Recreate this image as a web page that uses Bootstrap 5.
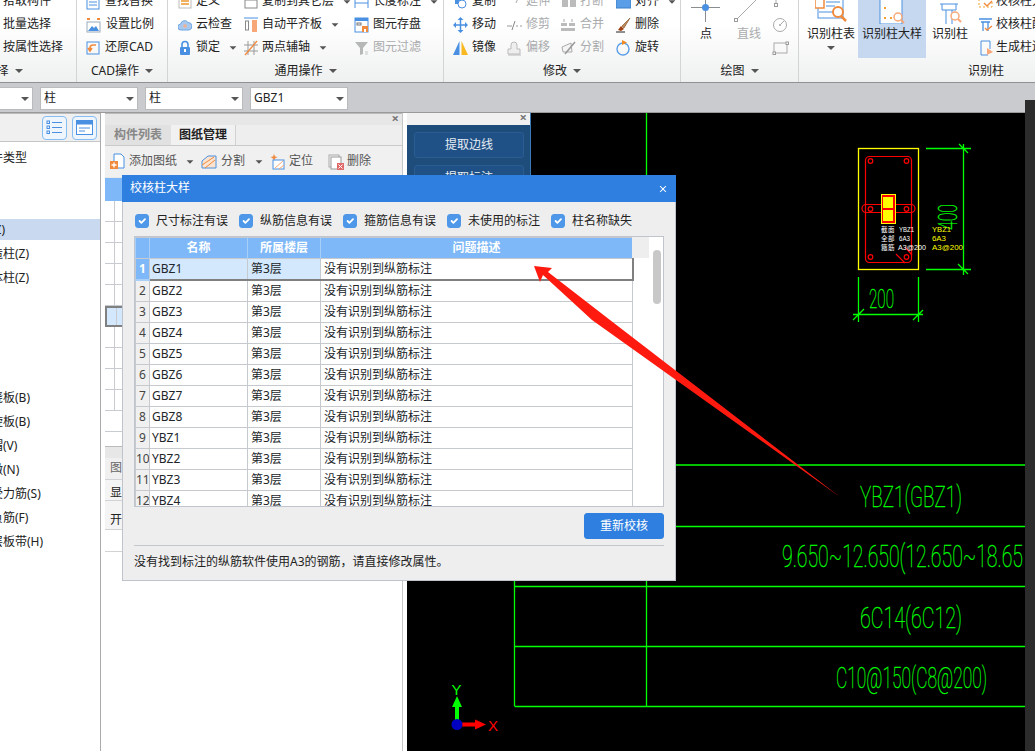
<!DOCTYPE html>
<html lang="zh-CN">
<head>
<meta charset="UTF-8">
<meta name="viewport" content="width=device-width, initial-scale=1.0">
<title>校核柱大样</title>
<link href="https://cdn.jsdelivr.net/npm/bootstrap@5.3.0/dist/css/bootstrap.min.css" rel="stylesheet">
<style>
    html, body { height: 100%; overflow: hidden; background: #fff; }
    body { font-family: "Noto Sans", "Noto Sans CJK SC", sans-serif; font-size: 12px; line-height: 1.2; color: #222; }
    .app { width: 1035px; height: 751px; position: relative; overflow: hidden; }
    svg { display: block; flex: none; }

    /* ribbon */
    .ribbon { height: 83px; overflow: hidden; background: linear-gradient(#fff 30%, #eff0f0); border-bottom: 1px solid #8f9295; }
    .rb-group { height: 82px; border-right: 1px solid #d2d4d6; flex: none; }
    .rb-body { height: 69px; margin-top: -10px; }
    .rb-label { height: 24px; display: flex; align-items: center; justify-content: center; gap: 6px; white-space: nowrap; }
    .rb-col { flex: none; }
    .rb-item { height: 23px; display: flex; align-items: center; gap: 4px; white-space: nowrap; }
    .rb-item.off { color: #a9abad; }
    .tri { display: inline-block; flex: none; width: 0; height: 0; border-left: 4px solid transparent; border-right: 4px solid transparent; border-top: 4px solid #555; }
    .rb-item .tri { margin-left: 5px; transform: scale(.85); }
    .g1 { width: 146px; margin-left: -69px; } .g1 .rb-body { padding-left: 72px; }
    .g2 { width: 91px; } .g2 .rb-body { padding-left: 9px; } .g2 .rb-item { gap: 5px; }
    .g3 { width: 276px; } .g3 .rb-body { padding-left: 10px; }
    .g4 { width: 237px; } .g4 .rb-body { padding-left: 9px; }
    .g5 { width: 118px; } .g5 .rb-body { padding-left: 8px; }
    .g6 { width: 372px; border: 0; margin-left: 1px; } .g6 .rb-body { padding-left: 7px; }
    .w66 { width: 66px; } .w110 { width: 110px; } .w54 { width: 54px; } .w55 { width: 55px; }
    .big { flex: none; display: flex; flex-direction: column; align-items: center; height: 68px; white-space: nowrap; }
    .big .big-ico { height: 34px; display: flex; align-items: flex-end; }
    .big .big-txt { height: 22px; line-height: 20px; }
    .big.off { color: #a9abad; }
    .big.on { background: #c6d8ef; }
    .b34 { width: 34px; } .b48 { width: 48px; } .b68 { width: 68px; margin-left: 3px; } .b36 { width: 36px; margin-left: 6px; }
    .gap-b { margin-left: 9px; } .gap-s { margin-left: 5px; }
    .gap-c { margin-left: 10px; }
    .g6 .rb-item { gap: 2px; }

    /* combo bar */
    .combos { height: 28px; background: #c9cbce; padding-top: 4px; gap: 7px; margin-left: -65px; }
    .combo { width: 98px; height: 23px; background: #fff; border: 1px solid #b9bbbd; display: flex; align-items: center; justify-content: space-between; padding: 0 3px 0 3px; font-size: 12px; }
    .combo-bar { background: #c9cbce; border-bottom: 1px solid #9a9a9a; height: 30px; }

    /* work area */
    .work { height: 638px; }
    .tree-pane { width: 101px; flex: none; border-right: 1px solid #a9abad; overflow: hidden; }
    .tree-head { height: 29px; background: #f0f0f0; border-top: 1px solid #b8babc; border-bottom: 1px solid #c4c6c8; padding: 0 3px 0 0; gap: 5px; }
    .tree-btn { width: 25px; height: 24px; border: 1px solid #85bdf2; border-radius: 4px; background: #eef5fd; display: flex; align-items: center; justify-content: center; }
    .tree-list { padding-top: 5px; }
    .tree-row { height: 21px; margin-bottom: 3px; line-height: 21px; padding-left: 0; white-space: nowrap; text-indent: -21px; }
    .tree-row.sel { background: #c9daf0; }
    .gutter { width: 4px; flex: none; background: #fff; }

    .list-pane { width: 298px; flex: none; background: #fff; border-right: 1px solid #c4c6c8; }
    .pane-top { height: 12px; background: #e7e7e7; border-top: 1px solid #b8babc; position: relative; }
    .pane-x { position: absolute; right: 3px; top: -2px; font-size: 13px; line-height: 13px; color: #777; font-weight: 700; }
    .tab-row { height: 21px; background: #eee; border-bottom: 1px solid #c8cacc; }
    .tab-a { width: 66px; background: #e1e1e1; color: #888; display: flex; align-items: center; justify-content: center; font-weight: 600; }
    .tab-b { width: 65px; background: #f1f1f1; border-right: 1px solid #cfd1d3; display: flex; align-items: center; justify-content: center; font-weight: 600; }
    .pane-tools { height: 31px; background: #f0f0f0; padding-left: 5px; color: #555; white-space: nowrap; }
    .pane-tools .rb-item { gap: 3px; }
    .pane-tools .tri { margin-left: 6px; transform: scale(.85); }
    .t1 { width: 91px; } .t2 { width: 68px; } .t3 { width: 59px; }
    .t2, .t3 { gap: 4px !important; }
    .grid-head { height: 24px; background: #7eb8f8; border-top: 1px solid #e8e8e8; }
    .grid-row { height: 21px; border-bottom: 1px solid #c8ccd0; display: flex; }
    .grid-row span { display: block; width: 10px; border-right: 1px solid #c8ccd0; }
    .grid-row.sel { background: #d3e8fd; border: 2px solid #808080; border-right: 0; }
    .grid-gap { height: 14px; background: #fff; }
    .grid-row.end span { border-right: 0; }
    .sub-tab { height: 22px; background: #f0f0f0; border-bottom: 1px solid #d0d2d4; padding-left: 5px; display: flex; align-items: center; color: #666; }
    .sub-row { height: 21px; border-bottom: 1px solid #d0d2d4; display: flex; align-items: center; padding: 6px 0 0 5px; background: #f4f4f4; }
    .sub-row.tall { height: 29px; padding-top: 10px; background: #f4f4f4; }
    .sub-row.plain { height: 22px; padding-top: 0; background: #fff; }

    .cad { flex: 1 1 auto; background: #000; position: relative; margin-left: 4px; }
    .cad-svg { width: 618px; height: 638px; }
    .cad-txt { font-family: "Roboto", "Liberation Sans", sans-serif; font-weight: 100; fill: #00ff00; stroke: #00ff00; stroke-width: .35px; }
    .strip { position: absolute; right: 0; top: 100px; width: 10px; height: 651px; background: #2d2c2c; }

    /* floating tool window */
    .tool-win { position: absolute; left: 0; top: 0; width: 124px; height: 300px; background: #1e4d7c; border-right: 1px solid #3a7ab8; }
    .tool-top { height: 12px; background: #f1f1f1; position: relative; }
    .tool-btn { display: block; width: 110px; height: 26px; margin: 7px 0 6px 7px; padding: 0; background: #1f5186; border: 1px solid #2a5d92; border-radius: 3px; color: #e8eef5; font-size: 12px; line-height: 24px; }

    /* dialog */
    .dlg { position: absolute; left: 122px; top: 175px; width: 554px; height: 406px; }
    .dlg .modal-content { height: 100%; background: #eee; border: 1px solid #bfc3cb; border-radius: 0; }
    .dlg .modal-header { height: 27px; background: #2e7fe0; color: #fff; padding: 0 8px 0 8px; border: 0; border-radius: 0; margin: -1px -1px 0; font-size: 12px; }
    .dlg .btn-close { width: 8px; height: 8px; padding: 0; margin: 0 1px 0 0; opacity: 1; background-size: 8px; }
    .checks { padding: 12px 0 0 12px; gap: 11px; height: 34px; }
    .chk-item { display: flex; align-items: flex-start; gap: 7px; white-space: nowrap; line-height: 14px; }
    .chk { width: 14px; height: 14px; margin: 0; border-radius: 3px; }
    .chk:checked { background-color: #4f97e8; border-color: #4f97e8; }
    .frame { margin-left: 11px; width: 530px; height: 271px; border: 1px solid #c0c4cc; background: #fff; position: relative; overflow: hidden; }
    .q-table { width: 497px; table-layout: fixed; margin: 0; --bs-table-border-color: #c6cace; font-size: 12px; border-collapse: collapse; }
    .q-table th, .q-table td { height: 21px; padding: 0 2px; line-height: 20px; vertical-align: middle; white-space: nowrap; overflow: hidden; }
    .q-table td.pad3 { padding-left: 3px; }
    .q-table th { background: #7eb8f8; color: #fff; font-weight: 700; text-align: center; border-color: #a8cff8; }
    .q-table td.num { text-align: center; background: #f0f0f0; padding: 0; color: #444; }
    .q-table tr.cur td { border-bottom: 2px solid #808080; }
    .q-table tr.cur td.num { background: #7eb8f8; color: #fff; font-weight: 700; border-bottom-color: #a8cff8; }
    .q-table tr.cur td.hl { background: #d3e8fd; }
    .q-table tr.cur td.last { border-right: 2px solid #808080; }
    .head-end { position: absolute; left: 497px; top: 0; width: 17px; height: 21px; background: #eee; }
    .thumb { position: absolute; left: 518px; top: 13px; width: 8px; height: 54px; border-radius: 4px; background: #c8c8c8; }
    .act-row { height: 38px; padding: 6px 11px 0 0; }
    .act-btn { width: 80px; height: 26px; padding: 0; font-size: 12px; background: #2e7fe0; border-color: #2e7fe0; border-radius: 3px; }
    .dlg-foot { margin: 0 11px; border-top: 1px solid #c4c8ce; padding-top: 9px; white-space: nowrap; }
    .arrow-layer { position: absolute; left: 0; top: 0; width: 1035px; height: 751px; pointer-events: none; }
</style>
</head>
<body>
<div class="app">

    <!-- ribbon -->
    <div class="ribbon d-flex">
        <div class="rb-group g1">
            <div class="rb-body d-flex">
                <div class="rb-col">
                    <div class="rb-item">拾取构件</div>
                    <div class="rb-item">批量选择</div>
                    <div class="rb-item">按属性选择</div>
                </div>
            </div>
            <div class="rb-label">选择<i class="tri"></i></div>
        </div>

        <div class="rb-group g2">
            <div class="rb-body d-flex">
                <div class="rb-col">
                    <div class="rb-item"><svg width="14" height="16" viewBox="0 0 14 16"><rect x="1" y="1" width="12" height="14" fill="#fff" stroke="#4a90e2"/><path d="M3 5h8M3 8h8M3 11h8" stroke="#4a90e2"/></svg>查找替换</div>
                    <div class="rb-item"><svg width="15" height="16" viewBox="0 0 15 16"><path d="M1 2h3M11 2h3" stroke="#f08a3c" stroke-width="2"/><rect x="1" y="5" width="13" height="10" fill="#fff" stroke="#9ab"/><path d="M2 14l4-5 2 2 2-2 3 5z" fill="#4a90e2"/></svg>设置比例</div>
                    <div class="rb-item"><svg width="14" height="16" viewBox="0 0 14 16"><rect x="1" y="2" width="12" height="12" fill="none" stroke="#4a90e2"/><path d="M10 5H7a3 3 0 0 0-3 3v2M2 8l2 3 2-3" fill="none" stroke="#f08a3c" stroke-width="1.6"/></svg>还原CAD</div>
                </div>
            </div>
            <div class="rb-label">CAD操作<i class="tri"></i></div>
        </div>

        <div class="rb-group g3">
            <div class="rb-body d-flex">
                <div class="rb-col w66">
                    <div class="rb-item"><svg width="14" height="16" viewBox="0 0 14 16"><rect x="1" y="2" width="12" height="12" fill="#fff" stroke="#bbb"/><path d="M3 7h8M3 10h8" stroke="#f0b060" stroke-width="2"/></svg>定义</div>
                    <div class="rb-item"><svg width="14" height="16" viewBox="0 0 14 16"><path d="M3 13a3 3 0 0 1-.3-6A4 4 0 0 1 10 5.500a3.800 3.800 0 0 1 1 7.500z" fill="#a9c9ee" stroke="#6da5e5"/><circle cx="7" cy="9" r="1.800" fill="#f0b090"/></svg>云检查</div>
                    <div class="rb-item"><svg width="14" height="16" viewBox="0 0 14 16"><path d="M4 7V4.500a3 3 0 0 1 6 0V7" fill="none" stroke="#4a90e2" stroke-width="1.600"/><rect x="2" y="7" width="10" height="8" rx="1" fill="#4a90e2"/><rect x="6" y="9" width="2" height="3" fill="#fff"/></svg>锁定<i class="tri"></i></div>
                </div>
                <div class="rb-col w110">
                    <div class="rb-item"><svg width="14" height="16" viewBox="0 0 14 16"><rect x="1" y="6" width="12" height="8" fill="#fff" stroke="#888"/><path d="M1 3h12" stroke="#4a90e2" stroke-width="2"/></svg>复制到其它层<i class="tri"></i></div>
                    <div class="rb-item"><svg width="14" height="16" viewBox="0 0 14 16"><path d="M0 1h14" stroke="#4a90e2"/><rect x="1.500" y="4" width="3" height="9" fill="#fff" stroke="#888"/><rect x="8" y="3" width="5" height="12" fill="#f8a878"/></svg>自动平齐板<i class="tri"></i></div>
                    <div class="rb-item"><svg width="14" height="16" viewBox="0 0 14 16"><path d="M4 1v14M10 1v14M0 5h14M0 11h14" stroke="#999"/><path d="M1 15L13 1" stroke="#f08a3c" stroke-width="1.300"/></svg>两点辅轴<i class="tri"></i></div>
                </div>
                <div class="rb-col">
                    <div class="rb-item gap-1"><svg width="15" height="16" viewBox="0 0 15 16"><path d="M1 4v10M14 4v10M1 9h13" stroke="#4a90e2"/></svg>长度标注<i class="tri"></i></div>
                    <div class="rb-item"><svg width="15" height="16" viewBox="0 0 15 16"><rect x="1" y="1" width="13" height="14" fill="#fff" stroke="#4a90e2"/><rect x="1" y="1" width="13" height="3" fill="#4a90e2"/><rect x="3" y="6" width="4" height="2" fill="none" stroke="#777"/><rect x="8" y="9" width="6" height="6" fill="#f08a3c"/><rect x="10" y="12" width="2" height="3" fill="#fff"/></svg>图元存盘</div>
                    <div class="rb-item off"><svg width="15" height="16" viewBox="0 0 15 16"><path d="M1 2h13l-5 6v6l-3 1V8z" fill="#b5b7b9"/><path d="M11 12h3M11 14h3" stroke="#c5c7c9"/></svg>图元过滤</div>
                </div>
            </div>
            <div class="rb-label">通用操作<i class="tri"></i></div>
        </div>

        <div class="rb-group g4">
            <div class="rb-body d-flex">
                <div class="rb-col w54">
                    <div class="rb-item"><svg width="15" height="16" viewBox="0 0 15 16"><rect x="2" y="2" width="8" height="8" fill="#4a90e2"/><circle cx="9" cy="10" r="4" fill="#fff" stroke="#4a90e2"/></svg>复制</div>
                    <div class="rb-item"><svg width="15" height="16" viewBox="0 0 15 16"><path d="M7.500 2v12M1.500 8h12" stroke="#4a90e2" stroke-width="1.500"/><path d="M7.500 0l-3 3h6zM7.500 16l-3-3h6zM0 8l3-3v6zM15 8l-3-3v6z" fill="#4a90e2"/></svg>移动</div>
                    <div class="rb-item"><svg width="15" height="16" viewBox="0 0 15 16"><path d="M6.500 1v14H0z" fill="#4a90e2"/><path d="M8.500 1v14H15z" fill="#f8b820"/></svg>镜像</div>
                </div>
                <div class="rb-col w54">
                    <div class="rb-item off"><svg width="15" height="16" viewBox="0 0 15 16"><path d="M12 2L9 9" stroke="#aaa"/></svg>延伸</div>
                    <div class="rb-item off"><svg width="15" height="16" viewBox="0 0 15 16"><path d="M0 9h5M9 9h2M13 9h2" stroke="#999"/><path d="M8 4l-3 9" stroke="#888"/></svg>修剪</div>
                    <div class="rb-item off"><svg width="15" height="16" viewBox="0 0 15 16"><path d="M1 14V9h3V5a3 3 0 0 1 6 0v4h3v5z" fill="#eee" stroke="#bbb"/><path d="M1 15h13" stroke="#bbb"/></svg>偏移</div>
                </div>
                <div class="rb-col w55">
                    <div class="rb-item off"><svg width="15" height="16" viewBox="0 0 15 16"><rect x="1" y="3" width="6" height="10" fill="#bbb"/><rect x="9" y="3" width="6" height="10" fill="#bbb"/></svg>打断</div>
                    <div class="rb-item off"><svg width="15" height="16" viewBox="0 0 15 16"><path d="M3 2v3M11 2v3" stroke="#aaa"/><rect x="0" y="6" width="6" height="3" fill="#bbb"/><rect x="8" y="6" width="6" height="3" fill="#bbb"/><rect x="0" y="11" width="14" height="3" fill="#bbb"/></svg>合并</div>
                    <div class="rb-item off"><svg width="15" height="16" viewBox="0 0 15 16"><path d="M1 7l9-4 1 9H2z" fill="#f4f4f4" stroke="#aaa"/><path d="M4 14L14 2" stroke="#999" stroke-width="1.500"/></svg>分割</div>
                </div>
                <div class="rb-col">
                    <div class="rb-item"><svg width="15" height="16" viewBox="0 0 15 16"><rect x="0" y="3" width="15" height="11" fill="#5b9ee8" stroke="#3d7fc8"/></svg>对齐<i class="tri"></i></div>
                    <div class="rb-item"><svg width="15" height="16" viewBox="0 0 15 16"><path d="M14 1L6 9l2 2z" fill="#c08a5a" stroke="#7a4a20" stroke-width=".6"/><path d="M5 9l3 3-3 2-3-1z" fill="#a04010"/><path d="M0 15h9" stroke="#222"/></svg>删除</div>
                    <div class="rb-item"><svg width="15" height="16" viewBox="0 0 15 16"><circle cx="7" cy="9" r="6" fill="none" stroke="#5b9ee8" stroke-width="1.400"/><path d="M6 0l5 2.500L6 5z" fill="#f08a20"/></svg>旋转</div>
                </div>
            </div>
            <div class="rb-label">修改<i class="tri"></i></div>
        </div>

        <div class="rb-group g5">
            <div class="rb-body d-flex">
                <div class="big b34">
                    <div class="big-ico"><svg width="30" height="34" viewBox="0 2 30 34"><path d="M0 19.500h29M14.500 0v34" stroke="#8a8d90"/><circle cx="14.500" cy="19.500" r="3.500" fill="#4a90e2"/></svg></div>
                    <div class="big-txt">点</div>
                </div>
                <div class="big b34 off gap-b">
                    <div class="big-ico"><svg width="34" height="34" viewBox="0 2 34 34"><path d="M4 32L26 10" stroke="#aaa"/><rect x="2.500" y="30.500" width="3" height="3" fill="#fff" stroke="#999"/></svg></div>
                    <div class="big-txt">直线</div>
                </div>
                <div class="rb-col gap-s">
                    <div class="rb-item"><svg width="18" height="16" viewBox="0 0 18 16"><path d="M5 2v8" stroke="#aaa"/><rect x="3.500" y="9.500" width="3" height="3" fill="#fff" stroke="#999"/></svg></div>
                    <div class="rb-item"><svg width="18" height="16" viewBox="0 0 18 16"><circle cx="9" cy="8" r="6.500" fill="none" stroke="#aaa"/><circle cx="9" cy="8" r="1" fill="#aaa"/><path d="M9 8l4-4" stroke="#aaa"/></svg></div>
                    <div class="rb-item"><svg width="18" height="16" viewBox="0 0 18 16"><rect x="3" y="3" width="13" height="10" fill="none" stroke="#aaa"/><rect x="2" y="12" width="2.500" height="2.500" fill="#fff" stroke="#999"/><rect x="15" y="2" width="2.500" height="2.500" fill="#fff" stroke="#999"/></svg></div>
                </div>
            </div>
            <div class="rb-label">绘图<i class="tri"></i></div>
        </div>

        <div class="rb-group g6">
            <div class="rb-body d-flex">
                <div class="big b48">
                    <div class="big-ico"><svg width="32" height="30" viewBox="0 0 32 30"><rect x="3" y="0" width="25" height="24" fill="#fff" stroke="#4a90e2"/><rect x="0" y="5" width="9" height="9" fill="#fff" stroke="#f08a3c" stroke-width="1.500"/><path d="M11 8h14M11 12h9M4 18h16" stroke="#4a90e2"/><circle cx="23" cy="18" r="5" fill="#fff" stroke="#f08a3c" stroke-width="2"/><path d="M26 22l5 5" stroke="#f08a3c" stroke-width="2.500"/></svg></div>
                    <div class="big-txt">识别柱表</div>
                    <i class="tri"></i>
                </div>
                <div class="big b68 on">
                    <div class="big-ico"><svg width="26" height="30" viewBox="0 0 26 30"><rect x="1" y="0" width="22" height="30" fill="#fff" stroke="#4a90e2"/><path d="M5 4h2M11 4h2M18 4h2M5 14h2M5 24h2M11 24h2" stroke="#f0a030" stroke-width="2"/><circle cx="19" cy="23" r="4" fill="#fff" stroke="#f8a878" stroke-width="1.500"/><path d="M22 26l3 3" stroke="#f8a878" stroke-width="2"/></svg></div>
                    <div class="big-txt">识别柱大样</div>
                </div>
                <div class="big b36">
                    <div class="big-ico"><svg width="26" height="32" viewBox="0 0 26 32"><path d="M3 12h18M5 12v6h14v-6M9 18v14M15 18v14" fill="none" stroke="#4a90e2"/><circle cx="18" cy="24" r="4" fill="#fff" stroke="#f8a878" stroke-width="1.500"/><path d="M21 27l3 3" stroke="#f8a878" stroke-width="2"/></svg></div>
                    <div class="big-txt">识别柱</div>
                </div>
                <div class="rb-col gap-c">
                    <div class="rb-item"><svg width="16" height="16" viewBox="0 0 16 16"><rect x="1" y="1" width="13" height="12" fill="none" stroke="#f0a030" stroke-dasharray="2 2"/><path d="M6 9l3 3 5-5" fill="none" stroke="#f08a3c" stroke-width="1.400"/></svg>校核柱大样</div>
                    <div class="rb-item"><svg width="16" height="16" viewBox="0 0 16 16"><path d="M1 2h13M3 5h9M5 5v9M10 5v9" fill="none" stroke="#4a90e2" stroke-width="1.300"/><path d="M7 11l2 2 5-4" fill="none" stroke="#f08a3c" stroke-width="1.400"/></svg>校核柱配筋</div>
                    <div class="rb-item"><svg width="16" height="16" viewBox="0 0 16 16"><path d="M3 1h9v8M3 15h7M3 1v14" fill="none" stroke="#4a90e2"/><path d="M9 8l6 4-6 3z" fill="#f8a878"/></svg>生成柱边线</div>
                </div>
            </div>
            <div class="rb-label">识别柱</div>
        </div>
    </div>

    <!-- combos -->
    <div class="combo-bar">
        <div class="combos d-flex">
            <div class="combo"><span></span><i class="tri"></i></div>
            <div class="combo"><span>柱</span><i class="tri"></i></div>
            <div class="combo"><span>柱</span><i class="tri"></i></div>
            <div class="combo"><span>GBZ1</span><i class="tri"></i></div>
        </div>
    </div>

    <div class="work d-flex">
        <!-- component tree -->
        <div class="tree-pane">
            <div class="tree-head d-flex justify-content-end align-items-center">
                <div class="tree-btn"><svg width="17" height="15" viewBox="0 0 17 15"><g fill="none" stroke="#4a90e2"><rect x="1" y="1" width="2.500" height="2.500"/><rect x="1" y="6" width="2.500" height="2.500"/><rect x="1" y="11" width="2.500" height="2.500"/><path d="M6 2.500h10M6 7.500h10M6 12.500h10"/></g></svg></div>
                <div class="tree-btn"><svg width="17" height="15" viewBox="0 0 17 15"><rect x=".5" y=".5" width="16" height="14" fill="#fff" stroke="#4a90e2"/><rect x=".5" y=".5" width="16" height="4" fill="#4a90e2"/><path d="M3 8h11M3 11h6" stroke="#4a90e2"/></svg></div>
            </div>
            <div class="tree-list" id="treeList"></div>
        </div>
        <div class="gutter"></div>

        <!-- drawing list -->
        <div class="list-pane d-flex flex-column">
            <div class="pane-top"><span class="pane-x">×</span></div>
            <div class="tab-row d-flex">
                <div class="tab-a">构件列表</div>
                <div class="tab-b">图纸管理</div>
            </div>
            <div class="pane-tools d-flex align-items-center">
                <div class="rb-item t1"><svg width="16" height="17" viewBox="0 0 16 17"><path d="M4 1h7l3 3v11H4z" fill="#fff" stroke="#4a90e2"/><rect x="0" y="8" width="8" height="8" fill="#f08a3c"/><path d="M4 9.500v5M1.500 12h5" stroke="#fff" stroke-width="1.300"/></svg>添加图纸<i class="tri"></i></div>
                <div class="rb-item t2"><svg width="16" height="16" viewBox="0 0 16 16"><path d="M1 7l6-5h8v12H1z" fill="#fbe3cf" stroke="#4a90e2"/><path d="M1 11L13 3M4 14l10-8" stroke="#f08a3c"/></svg>分割<i class="tri"></i></div>
                <div class="rb-item t3"><svg width="16" height="16" viewBox="0 0 16 16"><path d="M5 0l1 2.500L8.500 3 6 4.500 5 7 4 4.500 1.500 3 4 2.500z" fill="#f08a3c"/><rect x="4" y="6" width="11" height="9" fill="#fff" stroke="#4a90e2"/><path d="M6 14l8-7M10 15l5-4" stroke="#f8a878"/></svg>定位</div>
                <div class="rb-item"><svg width="16" height="16" viewBox="0 0 16 16"><rect x="1" y="1" width="10" height="12" fill="#f4f4f4" stroke="#aaa"/><rect x="3" y="3" width="10" height="12" fill="#fff" stroke="#999"/><rect x="9" y="9" width="7" height="7" fill="#e06a6a"/><path d="M10.500 10.500l4 4M14.500 10.500l-4 4" stroke="#fff"/></svg>删除</div>
            </div>
            <div class="grid-head"></div>
            <div id="bgGrid"></div>
            <div class="grid-gap"></div>
            <div class="pane-top"></div>
            <div class="sub-tab">图层设置</div>
            <div class="sub-row">显示指定图层</div>
            <div class="sub-row tall">开/关</div>
            <div class="sub-row plain"></div>
        </div>

        <!-- cad canvas -->
        <div class="cad">
            <svg class="cad-svg" viewBox="407 113 618 638">
                <g stroke="#00ff00" stroke-width="1.300" fill="none">
                    <path d="M646.500 113V706M514.500 465V706M407 465H1025M407 526.500H1025M514.500 586.500H1025M514.500 646.500H1025M514.500 706.500H1025"/>
                    <path d="M926 148.500H971M926 269.500H971M963.500 144V275M959 144L968 153M958 264L968 274"/>
                    <path d="M858.500 277V322M918.500 277V322M853 314.500H923M853 320L864 309M913 320L923 310"/>
                </g>
                <text class="cad-txt" x="869" y="307.500" font-size="26" textLength="25" lengthAdjust="spacingAndGlyphs">200</text>
                <text class="cad-txt" transform="translate(957 230) rotate(-90)" font-size="26" textLength="26" lengthAdjust="spacingAndGlyphs">400</text>
                <text class="cad-txt" x="860" y="507" font-size="30" textLength="102" lengthAdjust="spacingAndGlyphs">YBZ1(GBZ1)</text>
                <text class="cad-txt" x="782" y="567" font-size="31" textLength="241" lengthAdjust="spacingAndGlyphs">9.650~12.650(12.650~18.65</text>
                <text class="cad-txt" x="860" y="628" font-size="30" textLength="102" lengthAdjust="spacingAndGlyphs">6C14(6C12)</text>
                <text class="cad-txt" x="836" y="688" font-size="30" textLength="151" lengthAdjust="spacingAndGlyphs">C10@150(C8@200)</text>

                <!-- column section -->
                <rect x="858.500" y="148.500" width="60" height="121" fill="none" stroke="#ffff00" stroke-width="1.300"/>
                <g fill="none" stroke="#ff0000" stroke-width="1.200">
                    <rect x="865.500" y="156.500" width="46" height="106" rx="4"/>
                    <path d="M866 204.500H881M896 204.500H911M866 212.500H881M896 212.500H911M866 204.500a4 4 0 0 0 0 8M911 204.500a4 4 0 0 1 0 8"/>
                    <circle cx="870.500" cy="161" r="2.300"/><circle cx="906.500" cy="161" r="2.300"/>
                    <circle cx="870.500" cy="209" r="2.300"/><circle cx="906.500" cy="209" r="2.300"/>
                    <circle cx="870.500" cy="257" r="2.300"/><circle cx="906.500" cy="257" r="2.300"/>
                    <path d="M896 254L905 263M905 247L912 255"/>
                </g>
                <rect x="881.500" y="194.500" width="14" height="29" fill="#ff0000" stroke="#ffff00"/>
                <rect x="883" y="197" width="10" height="11" fill="#ffff00"/>
                <rect x="883" y="210" width="10" height="11" fill="#ffff00"/>
                <g font-family="Liberation Sans, sans-serif" font-size="7" fill="#ffffff">
                    <text x="881" y="232" textLength="13" lengthAdjust="spacingAndGlyphs">截面</text>
                    <text x="899" y="232" textLength="15" lengthAdjust="spacingAndGlyphs">YBZ1</text>
                    <text x="881" y="241" textLength="13" lengthAdjust="spacingAndGlyphs">全部</text>
                    <text x="899" y="241" textLength="11" lengthAdjust="spacingAndGlyphs">6A3</text>
                    <text x="881" y="250" textLength="13" lengthAdjust="spacingAndGlyphs">箍筋</text>
                    <text x="898" y="250" textLength="28" lengthAdjust="spacingAndGlyphs">A3@200</text>
                </g>
                <g font-family="Liberation Sans, sans-serif" font-size="7" fill="#ffff00">
                    <text x="932" y="232" textLength="19" lengthAdjust="spacingAndGlyphs">YBZ1</text>
                    <text x="932" y="241" textLength="14" lengthAdjust="spacingAndGlyphs">6A3</text>
                    <text x="932" y="250" textLength="31" lengthAdjust="spacingAndGlyphs">A3@200</text>
                </g>

                <!-- ucs -->
                <rect x="455" y="704" width="4" height="20" fill="#00ff00"/>
                <path d="M457 696l5 11h-10z" fill="#00ff00"/>
                <rect x="457" y="722.500" width="20" height="4" fill="#ff0000"/>
                <path d="M486 724.500l-11-5v10z" fill="#ff0000"/>
                <circle cx="457" cy="724.500" r="5.500" fill="#0000c0"/>
                <text x="451.500" y="695" font-family="Liberation Sans, sans-serif" font-size="15" fill="#00ff00">Y</text>
                <text x="488" y="731" font-family="Liberation Sans, sans-serif" font-size="15" fill="#ff0000">X</text>
            </svg>

            <div class="tool-win">
                <div class="tool-top"><span class="pane-x">×</span></div>
                <button class="tool-btn" type="button">提取边线</button>
                <button class="tool-btn" type="button">提取标注</button>
            </div>
        </div>
    </div>
    <div class="strip"></div>

    <!-- dialog -->
    <div class="dlg">
        <div class="modal-content">
            <div class="modal-header">
                <span class="flex-grow-1">校核柱大样</span>
                <button type="button" class="btn-close btn-close-white" aria-label="Close"></button>
            </div>
            <div class="checks d-flex">
                <label class="chk-item"><input class="form-check-input chk" type="checkbox" checked>尺寸标注有误</label>
                <label class="chk-item"><input class="form-check-input chk" type="checkbox" checked>纵筋信息有误</label>
                <label class="chk-item"><input class="form-check-input chk" type="checkbox" checked>箍筋信息有误</label>
                <label class="chk-item"><input class="form-check-input chk" type="checkbox" checked>未使用的标注</label>
                <label class="chk-item"><input class="form-check-input chk" type="checkbox" checked>柱名称缺失</label>
            </div>
            <div class="frame">
                <table class="table table-bordered q-table">
                    <colgroup><col width="14"><col width="98"><col width="73"><col width="312"></colgroup>
                    <thead><tr><th></th><th>名称</th><th>所属楼层</th><th>问题描述</th></tr></thead>
                    <tbody id="checkRows"></tbody>
                </table>
                <div class="head-end"></div>
                <div class="thumb"></div>
            </div>
            <div class="act-row d-flex justify-content-end">
                <button type="button" class="btn btn-primary act-btn">重新校核</button>
            </div>
            <div class="dlg-foot">没有找到标注的纵筋软件使用A3的钢筋，请直接修改属性。</div>
        </div>
    </div>

    <!-- red annotation arrow -->
    <svg class="arrow-layer" viewBox="0 0 1035 751">
        <path d="M534 266L552 268L548 272L610 320L840 497L592 320L543 275L540 282Z" fill="#ff1a10"/>
    </svg>
</div>

<script>
    document.addEventListener("DOMContentLoaded", function () {
        // left tree, some rows have no visible text in this crop
        const tree = ["构件类型", "", "", "柱(Z)", "构造柱(Z)", "砌体柱(Z)", "", "", "", "", "现浇板(B)", "螺旋板(B)", "柱帽(V)", "柱墩(N)", "板受力筋(S)", "板负筋(F)", "楼层板带(H)"];
        document.getElementById("treeList").innerHTML = tree.map((t, i) =>
            `<div class="tree-row${i === 3 ? " sel" : ""}">${t}</div>`).join("");

        // background grid behind the dialog
        let grid = "";
        for (let i = 0; i < 11; i++) {
            const cls = i === 5 ? " sel" : (i === 10 ? " end" : "");
            grid += `<div class="grid-row${cls}"><span></span></div>`;
        }
        document.getElementById("bgGrid").innerHTML = grid;

        const names = ["GBZ1", "GBZ2", "GBZ3", "GBZ4", "GBZ5", "GBZ6", "GBZ7", "GBZ8", "YBZ1", "YBZ2", "YBZ3", "YBZ4", "YBZ5"];
        document.getElementById("checkRows").innerHTML = names.map((n, i) => `
            <tr class="${i === 0 ? "cur" : ""}">
                <td class="num">${i + 1}</td>
                <td class="hl">${n}</td>
                <td class="hl pad3">第3层</td>
                <td class="last pad3">没有识别到纵筋标注</td>
            </tr>`).join("");
    });
</script>
<script src="https://cdn.jsdelivr.net/npm/bootstrap@5.3.0/dist/js/bootstrap.bundle.min.js"></script>
</body>
</html>
